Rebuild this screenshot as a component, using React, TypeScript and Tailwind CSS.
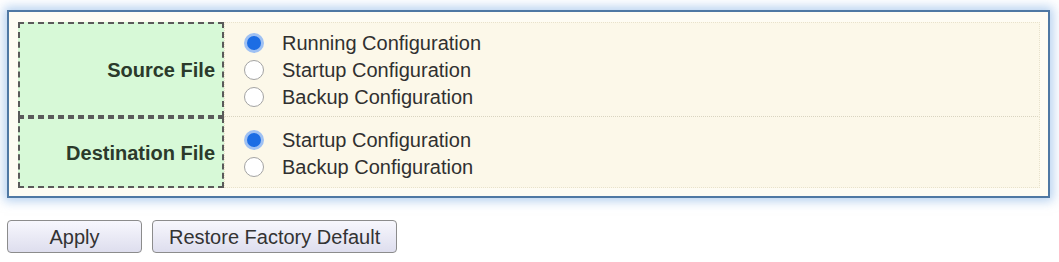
import React, { useState } from 'react';

type Option = { value: string; label: string };

const sourceOptions: Option[] = [
  { value: 'running', label: 'Running Configuration' },
  { value: 'startup', label: 'Startup Configuration' },
  { value: 'backup', label: 'Backup Configuration' },
];

const destOptions: Option[] = [
  { value: 'startup', label: 'Startup Configuration' },
  { value: 'backup', label: 'Backup Configuration' },
];

const Radio: React.FC<{ checked: boolean; label: string; onSelect: () => void }> = ({ checked, label, onSelect }) => (
  <label className="flex items-center h-[27px] cursor-pointer" onClick={onSelect}>
    {checked ? (
      <span className="flex items-center justify-center w-[20px] h-[20px] rounded-full bg-[#9fc1f3]">
        <span className="w-[14px] h-[14px] rounded-full bg-[#1c6de4]" />
      </span>
    ) : (
      <span className="w-[20px] h-[20px] rounded-full border-[1.5px] border-[#a3a3a3] bg-white" />
    )}
    <span className="ml-[18px] text-[20px] leading-none text-[#303030]">{label}</span>
  </label>
);

const App: React.FC = () => {
  const [source, setSource] = useState('running');
  const [dest, setDest] = useState('startup');

  return (
    <div className="w-[1059px] h-[262px] bg-white pt-[10px] pl-[7px]" style={{ fontFamily: '"Liberation Sans", Arial, sans-serif' }}>
      <div className="w-[1043px] h-[188px] border-2 border-[#4f78a3] bg-[#fefcf3] shadow-[0_0_10px_3px_rgba(120,170,225,0.55)] pt-[10px] pl-[9px] pr-[8px]">
        <div className="grid grid-cols-[206px_1fr]">
          <div className="h-[95px] flex items-center justify-end pr-[7px] bg-[#d7f9d7] border-2 border-dashed border-[#5a5a5a] text-[20px] font-bold text-[#2b3a2b]">
            Source File
          </div>
          <div className="h-[95px] flex flex-col justify-center pl-[19px] bg-[#fcf8e9] border border-dotted border-[#e8e2cc] border-b-[#d9d4c0]">
            {sourceOptions.map(o => (
              <Radio key={o.value} checked={source === o.value} label={o.label} onSelect={() => setSource(o.value)} />
            ))}
          </div>
          <div className="h-[71px] flex items-center justify-end pr-[7px] bg-[#d7f9d7] border-2 border-dashed border-[#5a5a5a] text-[20px] font-bold text-[#2b3a2b]">
            Destination File
          </div>
          <div className="h-[71px] flex flex-col justify-center pl-[19px] pt-[3px] bg-[#fcf8e9] border border-t-0 border-dotted border-[#e8e2cc]">
            {destOptions.map(o => (
              <Radio key={o.value} checked={dest === o.value} label={o.label} onSelect={() => setDest(o.value)} />
            ))}
          </div>
        </div>
      </div>
      <div className="flex gap-[10px] mt-[22px]">
        <button className="w-[135px] h-[33px] rounded-[4px] border border-[#8c8c8c] bg-gradient-to-b from-[#f7f7fd] to-[#dedeee] text-[20px] text-[#333]">
          Apply
        </button>
        <button className="h-[33px] px-[16px] rounded-[4px] border border-[#8c8c8c] bg-gradient-to-b from-[#f7f7fd] to-[#dedeee] text-[20px] text-[#333]">
          Restore Factory Default
        </button>
      </div>
    </div>
  );
};

export default App;
